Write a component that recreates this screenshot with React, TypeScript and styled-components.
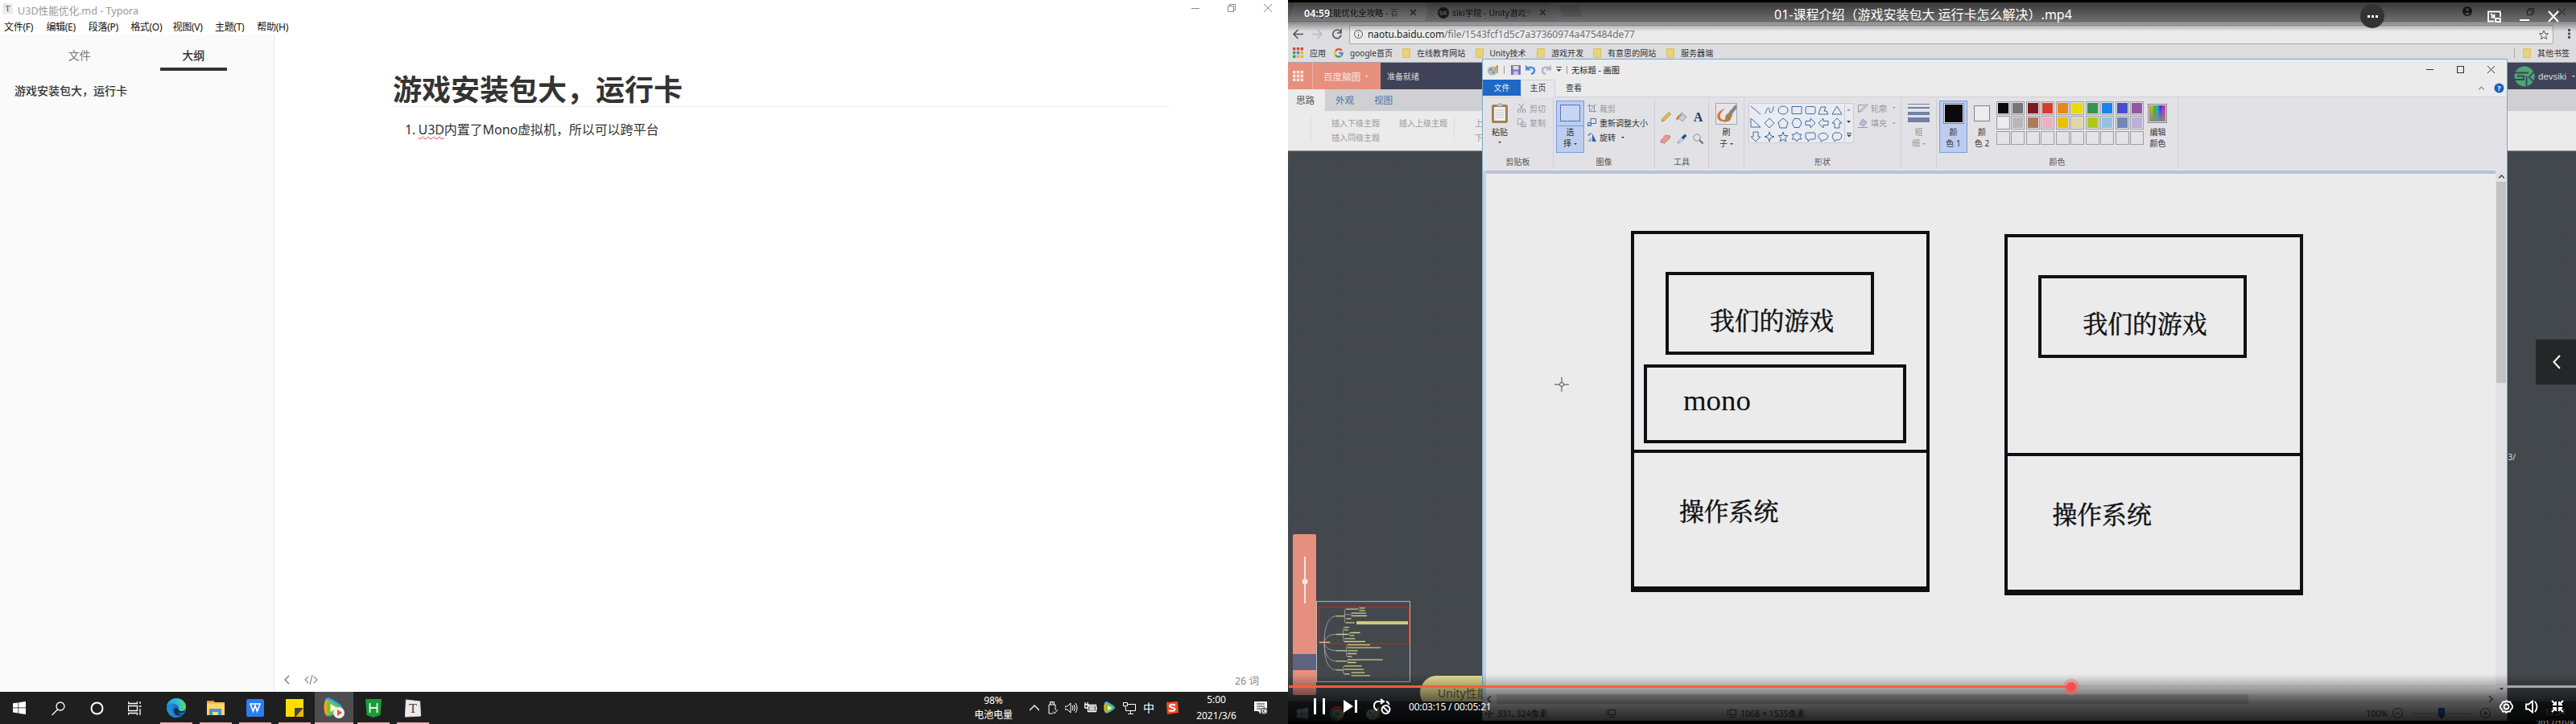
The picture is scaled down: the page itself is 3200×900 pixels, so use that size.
import React from "react";
import styled, { createGlobalStyle, css } from "styled-components";

const Global = createGlobalStyle`
  * { box-sizing: border-box; }
  body { margin: 0; background: #fff; overflow: hidden; }
  svg { display: block; flex: none; }
`;
const sans = `"Noto Sans", "Noto Sans CJK SC", sans-serif`;

const Desktop = styled.div`
  display: flex;
  width: 3200px;
  height: 900px;
  font-family: ${sans};
  white-space: nowrap;
`;

/* ---------- Editor ---------- */
const LeftScreen = styled.div`
  width: 1600px;
  height: 900px;
  display: flex;
  flex-direction: column;
  background: #fff;
`;
const EditorTitle = styled.div`
  height: 24px;
  display: flex;
  align-items: center;
  padding: 0 20px 4px 3px;
  font-size: 12.6px;
  color: #999;
`;
const TitleName = styled.span`
  flex: 1;
  margin-left: 6px;
  padding-top: 4px;
`;
const WindowButtons = styled.div`
  display: flex;
  gap: 35px;
`;
const MenuBar = styled.div`
  height: 19px;
  display: flex;
  padding-left: 5px;
  font-size: 12px;
  line-height: 19px;
  color: #111;
  letter-spacing: -0.3px;
`;
const MenuItem = styled.span`
  width: 52.4px;
`;
const EditorBody = styled.div`
  flex: 1;
  display: flex;
`;
const Sidebar = styled.aside`
  width: 341px;
  background: #fafafa;
  border-right: 1px solid #e7e7e7;
`;
const SideTabs = styled.div`
  display: flex;
  height: 45px;
  padding-left: 57px;
`;
const SideTab = styled.div<{ $active?: boolean }>`
  width: 84px;
  margin-right: 58px;
  text-align: center;
  font-size: 14px;
  line-height: 52px;
  height: 45px;
  color: ${(p) => (p.$active ? "#333" : "#777")};
  font-weight: ${(p) => (p.$active ? 500 : 400)};
  border-bottom: ${(p) => (p.$active ? "4px solid #333" : "0")};
`;
const OutlineItem = styled.div`
  padding: 15px 0 0 18px;
  font-size: 14px;
  line-height: 20px;
  font-weight: 500;
  color: #333;
`;
const Document = styled.main`
  flex: 1;
  display: flex;
  flex-direction: column;
`;
const Article = styled.article`
  flex: 1;
  width: 965px;
  margin-left: 147px;
  padding-top: 44px;
  color: #333;
`;
const Heading = styled.h1`
  margin: 0;
  height: 46px;
  font-size: 36px;
  line-height: 50px;
  font-weight: 700;
  border-bottom: 1px solid #eee;
`;
const ListLine = styled.div`
  display: flex;
  margin-top: 18px;
  padding-left: 15px;
  font-size: 16px;
  line-height: 20px;
  letter-spacing: -0.07px;
`;
const ListNumber = styled.span`
  width: 16.5px;
`;
const Misspelled = styled.span`
  text-decoration: underline wavy #e33 1px;
  text-underline-offset: 2px;
  text-decoration-skip-ink: none;
`;
const DocFooter = styled.footer`
  height: 30px;
  display: flex;
  align-items: center;
  padding: 0 36px 0 12px;
  color: #888;
  font-size: 12.5px;
`;
const WordCount = styled.span`
  margin-left: auto;
`;

/* ---------- Taskbar ---------- */
const Taskbar = styled.div`
  height: 40px;
  display: flex;
  background: #1f1f1f;
  color: #fff;
`;
const TaskButton = styled.div<{ $w: number; $lit?: boolean }>`
  width: ${(p) => p.$w}px;
  display: flex;
  align-items: center;
  justify-content: center;
  background: ${(p) => (p.$lit ? "#4d4d4d" : "transparent")};
`;
const RunningButton = styled(TaskButton)<{ $ml?: number }>`
  height: 40px;
  margin-left: ${(p) => p.$ml ?? 9}px;
  padding-top: 2px;
  border-bottom: 2px solid #f8b0b0;
`;
const Tray = styled.div`
  margin-left: auto;
  width: 395px;
  display: flex;
  align-items: center;
`;
const TrayText = styled.div<{ $w: number; $ml?: number; $line?: number }>`
  width: ${(p) => p.$w}px;
  margin-left: ${(p) => p.$ml ?? 0}px;
  text-align: center;
  font-size: 12px;
  line-height: ${(p) => p.$line ?? 18}px;
  letter-spacing: -0.1px;
`;
const TrayIcons = styled.div`
  display: flex;
  align-items: center;
  gap: 8px;
  margin-left: 17px;
`;
const Ime = styled.span`
  width: 16px;
  margin-right: 5px;
  font-size: 14px;
  line-height: 16px;
  text-align: center;
`;

/* ---------- Video ---------- */
const Video = styled.div`
  position: relative;
  width: 1600px;
  height: 900px;
  padding: 3px 0 4px;
  overflow: hidden;
  background: #000;
`;
const Recording = styled.div`
  display: flex;
  flex-direction: column;
  height: 893px;
  background: #43484c;
  font-size: 10px;
  color: #333;
`;
const ChromeTabs = styled.div`
  height: 24px;
  display: flex;
  align-items: flex-end;
  background: #c9c9cc;
  border-bottom: 1px solid #aaa;
`;
const ChromeTab = styled.div<{ $active?: boolean; $w: number }>`
  width: ${(p) => p.$w}px;
  height: 23px;
  display: flex;
  align-items: center;
  padding: 2px 12px 0 16px;
  margin-left: ${(p) => (p.$active ? 0 : -8)}px;
  font-size: 10.4px;
  color: #222;
  background: ${(p) => (p.$active ? "#dddde0" : "#c2c2c5")};
  clip-path: polygon(8px 0, calc(100% - 8px) 0, 100% 100%, 0 100%);
`;
const TabTitle = styled.span<{ $w: number }>`
  width: ${(p) => p.$w}px;
  overflow: hidden;
  margin: 0 9px 0 4px;
  mask-image: linear-gradient(to right, #000 85%, transparent);
`;
const NewTab = styled.div`
  width: 25px;
  height: 14px;
  margin: 0 0 5px 6px;
  background: #b4b4b7;
  border-radius: 3px;
  transform: skewX(18deg);
`;
const AccountArea = styled.div`
  margin-left: auto;
  display: flex;
  align-items: center;
  gap: 30px;
  padding: 0 13px 6px 0;
`;
const AddressRow = styled.div`
  height: 30px;
  display: flex;
  align-items: center;
  padding: 0 7px 0 6px;
  gap: 11px;
  background: #dddde0;
`;
const AddressBox = styled.div`
  flex: 1;
  height: 24px;
  margin: 1px 7px 0 -2px;
  display: flex;
  align-items: center;
  padding: 0 5px;
  background: #ebebec;
  border: 1px solid #a8a8aa;
  border-radius: 2px;
  font-size: 12px;
  letter-spacing: -0.05px;
  color: #6d6d70;
`;
const Url = styled.span`
  flex: 1;
  margin-left: 6px;
  b { color: #222; font-weight: 400; }
`;
const Bookmarks = styled.div`
  height: 21px;
  display: flex;
  align-items: center;
  padding: 0 8px 3px 6px;
  background: #dddde0;
  border-bottom: 1px solid #a5a5b0;
  color: #333;
`;
const Bookmark = styled.span<{ $w: number }>`
  width: ${(p) => p.$w}px;
  display: flex;
  align-items: center;
  gap: 8px;
  letter-spacing: 0.05px;
`;
const FolderIcon = styled.i`
  width: 10px;
  height: 12px;
  background: #e8d27c;
  border: 1px solid #d9c064;
  border-radius: 1px;
`;
const OtherBookmarks = styled.span`
  margin-left: auto;
  display: flex;
  align-items: center;
  gap: 8px;
  height: 13px;
  padding-left: 10px;
  border-left: 1px solid #aaa;
`;
const NaotuHeader = styled.div`
  height: 33px;
  display: flex;
  align-items: center;
  background: #404357;
  color: #d8d8dc;
`;
const NaotuApps = styled.div`
  width: 31px;
  height: 33px;
  padding: 10px 0 0 6px;
  background: #e7907d;
  border-right: 1px solid #efb5a8;
`;
const NaotuBrand = styled.div`
  width: 84px;
  height: 33px;
  display: flex;
  align-items: center;
  gap: 3px;
  padding-left: 13px;
  background: #e7907d;
  font-size: 11.6px;
  color: #fae6e1;
`;
const NaotuStatus = styled.span`
  margin-left: 8px;
`;
const NaotuUser = styled.div`
  margin-left: auto;
  width: 77px;
  display: flex;
  align-items: center;
  gap: 4px;
  font-family: "Liberation Sans", sans-serif;
  font-size: 11.5px;
`;
const NaotuTabs = styled.div`
  height: 27px;
  display: flex;
  background: #d0d0d2;
  font-size: 11.6px;
  line-height: 27px;
  color: #4674ad;
`;
const NaotuTab = styled.div<{ $active?: boolean }>`
  width: ${(p) => (p.$active ? 46 : 48)}px;
  padding-left: ${(p) => (p.$active ? 10 : 13)}px;
  ${(p) => p.$active && css`background: #ebebec; color: #555;`}
`;
const NaotuTools = styled.div`
  height: 50px;
  display: flex;
  padding-top: 6px;
  background: #ebebec;
  border-bottom: 1px solid #999;
  line-height: 18px;
  color: #999;
`;
const ToolColumn = styled.div<{ $w: number; $pl?: number; $line?: boolean }>`
  width: ${(p) => p.$w}px;
  height: 32px;
  padding-left: ${(p) => p.$pl ?? 0}px;
  border-right: ${(p) => (p.$line ? "1px solid #dcdcde" : "0")};
`;
const MindCanvas = styled.div`
  position: relative;
  flex: 1;
  overflow: hidden;
  background-color: #43484c;
  background-image:
    repeating-linear-gradient(90deg, rgba(70, 60, 60, 0.12) 0 1px, transparent 1px 17px),
    repeating-linear-gradient(0deg, rgba(70, 60, 60, 0.1) 0 1px, transparent 1px 23px);
`;
const ZoomPanel = styled.div`
  position: absolute;
  left: 6px;
  top: 476px;
  width: 29px;
  height: 200px;
  border-radius: 2px;
  background: linear-gradient(#e78f7e 0 149px, #5f6280 149px 169px, #e78f7e 169px);
`;
const MiniMap = styled.div`
  position: absolute;
  left: 35px;
  top: 559px;
`;
const MindNode = styled.div`
  position: absolute;
  left: 164px;
  top: 652px;
  width: 200px;
  height: 42px;
  padding-left: 22px;
  border-radius: 21px;
  background: #e6dd92;
  font-size: 14px;
  line-height: 43px;
  color: #6b6435;
`;
const ClippedNote = styled.span`
  position: absolute;
  right: 75px;
  top: 373px;
  color: #ddd;
`;
const RecordedTaskbar = styled.div`
  height: 24px;
  display: flex;
  align-items: center;
  padding: 5px 0 0 11px;
  background: #282b30;
  gap: 27px;
`;
const RecordedClock = styled.div`
  margin-left: auto;
  width: 52px;
  line-height: 14px;
  color: #aaa;
  padding-top: 10px;
  text-align: center;
`;

/* ---------- Paint window ---------- */
const PaintWindow = styled.div`
  position: absolute;
  left: 241px;
  top: 73px;
  width: 1274px;
  height: 823px;
  display: flex;
  flex-direction: column;
  background: #ebebec;
  border: 1px solid #74aacd;
  border-bottom: 0;
  font-size: 10px;
  color: #333;
`;
const PaintTitle = styled.div`
  height: 25px;
  display: flex;
  align-items: center;
  padding: 0 15px 0 6px;
`;
const Divider = styled.i<{ $ml: number }>`
  width: 1px;
  height: 10px;
  margin-left: ${(p) => p.$ml}px;
  background: #999;
`;
const PaintTools = styled.div`
  display: flex;
  align-items: center;
  gap: 6px;
  margin-left: 8px;
`;
const PaintName = styled.span`
  flex: 1;
  margin-left: 5px;
  font-size: 10.3px;
  color: #222;
`;
const PaintControls = styled.div`
  display: flex;
  gap: 29px;
`;
const PaintTabs = styled.div`
  height: 22px;
  display: flex;
  line-height: 21px;
  text-align: center;
  border-bottom: 1px solid #d0d0d4;
`;
const PaintTab = styled.div<{ $kind?: "file" | "active"; $w: number }>`
  width: ${(p) => p.$w}px;
  height: ${(p) => (p.$kind === "file" ? 20 : 22)}px;
  ${(p) => p.$kind === "file" && css`background: #2068c6; color: #e8eefa;`}
  ${(p) => p.$kind === "active" && css`background: #e8e8eb; border: 1px solid #d0d0d4; border-bottom: 0; line-height: 19px;`}
`;
const TabTail = styled.div`
  margin-left: auto;
  display: flex;
  align-items: center;
  gap: 12px;
  padding-right: 3px;
`;
const Ribbon = styled.div`
  height: 91px;
  display: flex;
  background: #e2e2e6;
`;
const Group = styled.section<{ $w: number }>`
  width: ${(p) => p.$w}px;
  height: 87px;
  margin-top: 1px;
  border-right: 1px solid #d0d0d4;
`;
const GroupBody = styled.div<{ $pl?: number; $gap?: number }>`
  height: 71px;
  display: flex;
  gap: ${(p) => p.$gap ?? 0}px;
  padding: 3px 0 0 ${(p) => p.$pl ?? 0}px;
`;
const GroupLabel = styled.div`
  line-height: 17px;
  text-align: center;
  color: #555;
`;
const TallButton = styled.div<{ $w: number; $on?: boolean; $dim?: boolean }>`
  width: ${(p) => p.$w}px;
  height: 65px;
  display: flex;
  flex-direction: column;
  align-items: center;
  line-height: 14px;
  text-align: center;
  ${(p) => p.$on && css`background: #bccdf0; box-shadow: inset 0 0 0 1px #7a9be0;`}
  ${(p) => p.$dim && css`color: #999;`}
`;
const TallArt = styled.div<{ $split?: boolean }>`
  width: 100%;
  height: 32px;
  display: flex;
  align-items: center;
  justify-content: center;
  border-bottom: ${(p) => (p.$split ? "1px solid #7a9be0" : "0")};
`;
const CommandList = styled.div<{ $ml?: number }>`
  display: flex;
  flex-direction: column;
  margin-left: ${(p) => p.$ml ?? 0}px;
`;
const Command = styled.div<{ $dim?: boolean }>`
  height: 18.4px;
  display: flex;
  align-items: center;
  gap: 4px;
  color: ${(p) => (p.$dim ? "#999" : "#333")};
`;
const Arrow = styled.i`
  display: inline-block;
  border: 2.5px solid transparent;
  border-top-color: currentColor;
  border-bottom: 0;
  margin-left: 3px;
  vertical-align: middle;
`;
const CenterArrow = styled(Arrow)`
  margin: 5px 0 0;
`;
const ToolGrid = styled.div`
  display: grid;
  grid-template-columns: repeat(3, 20px);
  grid-template-rows: 27px 27px;
  padding-top: 7px;
  align-items: center;
  justify-items: center;
`;
const Gallery = styled.div`
  width: 131px;
  height: 50px;
  margin-top: 3px;
  display: flex;
  background: #e9ebf2;
  border: 1px solid #cdcdd2;
`;
const ShapeGrid = styled.div`
  display: grid;
  grid-template-columns: repeat(7, 16.8px);
  grid-template-rows: repeat(3, 16.3px);
  align-items: center;
  justify-items: center;
  border-right: 1px solid #cdcdd2;
`;
const GalleryScroll = styled.div`
  flex: 1;
  display: flex;
  flex-direction: column;
  align-items: center;
  justify-content: space-around;
`;
const ColorSwatch = styled.i<{ $s: number; $c: string }>`
  width: ${(p) => p.$s}px;
  height: ${(p) => p.$s}px;
  background: ${(p) => p.$c};
  border: 1px solid #85858a;
  box-shadow: inset 0 0 0 1px #e8e8ea;
`;
const Palette = styled.div`
  display: grid;
  grid-template-columns: repeat(10, 17px);
  grid-auto-rows: 17px;
  gap: 1.4px 1.45px;
  padding-top: 1px;
`;
const Cell = styled.i<{ $c: string }>`
  border: 1px solid #a0a0a4;
  padding: 1px;
  background: ${(p) => p.$c} content-box;
`;
const Spectrum = styled.i`
  width: 24px;
  height: 24px;
  border: 1px solid #888;
  box-shadow: inset 0 0 0 1px #ddd;
  background: linear-gradient(transparent, #888),
    linear-gradient(90deg, #e33, #e8c800, #1cc628, #14b8d8, #2a2ae8, #d21de0, #e8304a);
`;
const WorkArea = styled.div`
  flex: 1;
  display: flex;
  padding-left: 4px;
  background: #c9cde0;
`;
const WorkLeft = styled.div`
  flex: 1;
  display: flex;
  flex-direction: column;
  border-top: 4px solid #bbc0d4;
`;
const Canvas = styled.div`
  position: relative;
  flex: 1;
  background: #ebebec;
`;
const VScroll = styled.div`
  width: 14px;
  display: flex;
  flex-direction: column;
  align-items: center;
  background: #e1e1e4;
  padding: 5px 0 16px;
`;
const VThumb = styled.div`
  width: 12px;
  height: 250px;
  margin: 4px 0 auto;
  background: #c2c2c4;
`;
const HScroll = styled.div`
  height: 12px;
  display: flex;
  align-items: center;
  background: #dcdcdf;
`;
const HThumb = styled.div`
  width: 934px;
  height: 12px;
  margin: 0 auto 0 3px;
  background: #bdbdc0;
`;
const StatusBar = styled.div`
  height: 21px;
  display: flex;
  align-items: center;
  padding: 2px 20px 0 3px;
  background: #e2e2e6;
  font-size: 10.5px;
`;
const StatusPart = styled.span<{ $w: number }>`
  width: ${(p) => p.$w}px;
  display: flex;
  align-items: center;
  gap: 5px;
`;
const ZoomTools = styled.span`
  margin-left: auto;
  display: flex;
  align-items: center;
  gap: 6px;
`;
const Frame = styled.div<{ $x: number; $y: number; $w: number; $h: number; $foot?: number }>`
  position: absolute;
  left: ${(p) => p.$x}px;
  top: ${(p) => p.$y}px;
  width: ${(p) => p.$w}px;
  height: ${(p) => p.$h}px;
  border: 4px solid #101012;
  border-bottom-width: ${(p) => p.$foot ?? 4}px;
`;
const Sketch = styled.div<{ $x: number; $y: number; $latin?: boolean }>`
  position: absolute;
  left: ${(p) => p.$x}px;
  top: ${(p) => p.$y}px;
  font-family: "Liberation Serif", "Noto Serif CJK SC", "Noto Sans CJK SC", serif;
  font-size: ${(p) => (p.$latin ? 36.8 : 30.8)}px;
  line-height: 40px;
  color: #101012;
  -webkit-text-stroke: ${(p) => (p.$latin ? 0 : 0.5)}px #101012;
`;
const Crosshair = styled.div`
  position: absolute;
  left: 85px;
  top: 253px;
`;

/* ---------- Player overlay ---------- */
const TopShade = styled.div`
  position: absolute;
  inset: 3px 0 auto;
  height: 36px;
  display: flex;
  padding-left: 20px;
  color: #fff;
  background: linear-gradient(rgba(0, 0, 0, 0.72), rgba(0, 0, 0, 0.48) 60%, transparent);
`;
const Clock = styled.span`
  width: 584px;
  font-size: 12.5px;
  font-weight: 600;
  line-height: 27px;
`;
const VideoTitle = styled.span`
  width: 728px;
  font-size: 16px;
  line-height: 30px;
`;
const MoreButton = styled.div`
  width: 30px;
  height: 30px;
  margin: 2px 113px 0 0;
  display: flex;
  align-items: center;
  justify-content: center;
  gap: 2px;
  border-radius: 50%;
  background: #333;
  i { width: 3px; height: 3px; background: #fff; }
`;
const PlayerWindow = styled.div`
  display: flex;
  gap: 23px;
  padding-top: 10px;
  margin-left: 15px;
`;
const BottomShade = styled.div`
  position: absolute;
  inset: auto 0 4px;
  height: 58px;
  background: linear-gradient(transparent, rgba(0, 0, 0, 0.36) 35%, rgba(0, 0, 0, 0.62) 60%, rgba(0, 0, 0, 0.84));
`;
const Progress = styled.div`
  position: absolute;
  left: 1px;
  right: 0;
  top: 852px;
  height: 3px;
  display: flex;
  align-items: center;
  background: #a6a6a6;
`;
const Played = styled.div`
  width: 972px;
  height: 3px;
  background: #ff5c38;
`;
const Knob = styled.div`
  width: 12px;
  height: 12px;
  margin-left: -6px;
  border-radius: 50%;
  background: #ff4b46;
  box-shadow: 0 0 0 4.5px rgba(255, 90, 90, 0.35);
`;
const Controls = styled.div`
  position: absolute;
  inset: auto 0 4px;
  height: 36px;
  display: flex;
  align-items: center;
  padding: 0 15px 0 32px;
  color: #fff;
  font-size: 12px;
`;
const ControlGroup = styled.div<{ $gap: number }>`
  display: flex;
  align-items: center;
  gap: ${(p) => p.$gap}px;
`;
const PlayTime = styled.span`
  margin: 0 auto 0 22px;
  letter-spacing: -0.18px;
`;
const DrawerTab = styled.div`
  position: absolute;
  right: 0;
  top: 422px;
  width: 50px;
  height: 56px;
  display: flex;
  align-items: center;
  padding-left: 21px;
  background: #242628;
`;

/* ---------- Icons ---------- */
type IconProps = { d: string; w?: number; h?: number; c?: string; s?: number; fill?: string };
const Icon = ({ d, w = 16, h = w, c = "currentColor", s = 1, fill = "none" }: IconProps) => (
  <svg width={w} height={h} viewBox={`0 0 ${w} ${h}`} fill={fill} stroke={s ? c : "none"} strokeWidth={s}>
    <path d={d} />
  </svg>
);
const Paper = ({ w, h }: { w: number; h: number }) => (
  <svg width={w} height={h} viewBox="0 0 22 24">
    <path d="M2 1l18 2 1 19-20 1z" fill="#ececec" stroke="#ddd" />
    <text x="11" y="18" fontSize="17" textAnchor="middle" fontFamily="Liberation Serif" fill="#444">T</text>
  </svg>
);
const WinLogo = ({ s, c = "#fff" }: { s: number; c?: string }) => (
  <svg width={s} height={s} viewBox="0 0 16 16" fill={c}>
    <path d="M0 2.3l6.5-.9v6.2H0zM7.2 1.3L16 0v7.6H7.2zM0 8.3h6.5v6.2L0 13.6zM7.2 8.3H16V16l-8.8-1.3z" />
  </svg>
);
const Edge = () => (
  <svg width="24" height="24" viewBox="0 0 24 24">
    <defs>
      <linearGradient id="eg" x1="0" x2="1"><stop stopColor="#1b9de2" /><stop offset=".6" stopColor="#2fc3d0" /><stop offset="1" stopColor="#62d84e" /></linearGradient>
    </defs>
    <circle cx="12" cy="12" r="12" fill="#1473c9" />
    <path d="M0 11C0 5 5 0 12 0s12 5 12 10c0 4-3 6-6 6-2.500 0-4-1-3.500-2.500C16 11 14 8 10 7 5 6 1 8 0 11z" fill="url(#eg)" />
    <path d="M14.500 13.500C12 10 8 13 9 17c1 4 6 6 12 3-3 1-6 0-7-2.500 3 1.500 7 1 9-2-2 .8-8 1.200-8.500-2z" fill="#12304f" />
    <path d="M10 7c-4 3-4 9 0 14 1 1.300 3 2.600 5 3-8 1-14-4-15-11 1-5 6-7 10-6z" fill="#2089d8" />
  </svg>
);
const Explorer = () => (
  <svg width="22" height="20" viewBox="0 0 22 20">
    <path d="M0 1h8l2 2h12v16H0z" fill="#f5c04a" />
    <path d="M0 5h22v14H0z" fill="#ffd766" />
    <path d="M0 1h8l1.500 2H0z" fill="#d99a1c" />
    <path d="M3 11h15v8h-4v-4H7v4H3z" fill="#3f97dc" />
  </svg>
);
const Wps = () => (
  <svg width="22" height="22" viewBox="0 0 22 22">
    <rect width="22" height="22" rx="2.500" fill="#2c7df2" />
    <path d="M4 6h14M5 6l3.500 9L11 8l2.500 7L17 6" fill="none" stroke="#fff" strokeWidth="1.700" />
  </svg>
);
const Note = () => (
  <svg width="22" height="22" viewBox="0 0 22 22">
    <path d="M0 0h22v22H0z" fill="#fd0" /><path d="M11 11h11L12.500 22H11z" fill="#444" /><path d="M22 11v11h-9.500z" fill="#f0b400" />
  </svg>
);
const TencentVideo = ({ s, badge }: { s: number; badge?: boolean }) => (
  <svg width={s} height={s} viewBox="0 0 26 26">
    <path d="M3 1c2-2 6 0 9 2 5 3 10 6 11 9s-10 9-14 11c-3 1-6 1-7-2C0 15 0 5 3 1z" fill="#2ba4f5" />
    <path d="M2 4c1-2 5-1 9 2 4 2 8 5 8 7 0 3-8 8-12 9-2 0-4 0-5-2C0 16 0 9 2 4z" fill="#ff9e17" />
    <path d="M6 4c3 0 14 6 14 9S9 22 6 22 4 4 6 4z" fill="#72c92c" />
    <path d="M8.500 8l8 5-8 5z" fill="#fff" />
    {badge && <><circle cx="19" cy="19" r="7" fill="#eee" /><path d="M17 15l6 4-6 4z" fill="#f4502d" /></>}
  </svg>
);
const HBuilder = () => (
  <svg width="20" height="23" viewBox="0 0 20 23">
    <path d="M0 0h20l-1.500 20L10 23l-8.500-3z" fill="#1a9c38" />
    <path d="M5.500 5v12M14.500 5v12M5.500 11h9" stroke="#e6f7e9" strokeWidth="1.800" />
  </svg>
);
const Sogou = () => (
  <svg width="16" height="16" viewBox="0 0 16 16">
    <path d="M1 1l14-1 1 14-14 2z" fill="#f4481e" />
    <path d="M12 4.500C9 3.200 4.500 3.700 5 6c.4 1.700 6.500 1.200 6.500 3.500S7 12.500 4 11" fill="none" stroke="#fff" strokeWidth="2" />
  </svg>
);
const ActionCenter = () => (
  <svg width="19" height="17" viewBox="0 0 19 17">
    <path d="M0 0h16v12H8v4l-3-4H0z" fill="#fff" /><path d="M3 3h10M3 6h10M3 9h6" stroke="#222" /><circle cx="12.500" cy="12" r="4" fill="#ddd" stroke="#222" />
    <path d="M13.500 9q-4 3 0 6" fill="none" stroke="#222" />
  </svg>
);
const ChromeLogo = () => (
  <svg width="18" height="18" viewBox="0 0 18 18">
    <circle cx="9" cy="9" r="9" fill="#d8b838" /><path d="M9 9L1.200 4.500A9 9 0 0 1 16.800 5z" fill="#d84a38" />
    <path d="M9 9L1.200 4.500A9 9 0 0 0 8 18z" fill="#3a9c50" /><circle cx="9" cy="9" r="4" fill="#4a7fd8" stroke="#ddd" />
  </svg>
);
const PaintLogo = ({ s }: { s: number }) => (
  <svg width={s} height={s} viewBox="0 0 14 14">
    <ellipse cx="6" cy="8" rx="6" ry="5" fill="#9fc3dc" stroke="#6b9cc0" strokeWidth=".6" />
    <circle cx="4" cy="6.500" r="1.300" fill="#d84a38" /><circle cx="3.500" cy="9.500" r="1.200" fill="#e8c53c" /><circle cx="7" cy="10" r="1.300" fill="#4ba04b" />
    <path d="M7 8l4-7 2 0V11H11.500V5L8.500 9z" fill="#e09a3c" />
  </svg>
);
const Google = () => (
  <svg width="12" height="12" viewBox="0 0 12 12" fill="none" strokeWidth="2.200">
    <path d="M9.800 3A4.700 4.700 0 0 0 2 3.500" stroke="#dd4b3c" /><path d="M2 3.500a4.700 4.700 0 0 0 0 5" stroke="#e8b820" />
    <path d="M2 8.500a4.700 4.700 0 0 0 7 1" stroke="#3a9c50" /><path d="M9 9.500A4.500 4.500 0 0 0 10.600 6H6.200" stroke="#4a7fd8" />
  </svg>
);
const DotGrid = ({ colors }: { colors: string[] }) => (
  <svg width="13" height="13" viewBox="0 0 13 13">
    {Array.from({ length: 9 }, (_, i) => (
      <rect key={i} x={(i % 3) * 4.8} y={Math.floor(i / 3) * 4.8} width="3.400" height="3.400" fill={colors[i % colors.length]} />
    ))}
  </svg>
);
const SikiLogo = () => (
  <svg width="26" height="26" viewBox="0 0 26 26">
    <circle cx="13" cy="13" r="12.500" fill="#4ba873" />
    <path d="M0 8.500h18M4 12.500h8v4.500H0M15.500 12.500V25M25 7l-6.500 7 6.500 6" fill="none" stroke="#404357" strokeWidth="1.800" />
  </svg>
);
const SikiBadge = () => (
  <svg width="14" height="14" viewBox="0 0 14 14">
    <circle cx="7" cy="7" r="7" fill="#333" />
    <path d="M6 5H3v2h3v2H2.500M8 4.500v5M11.500 4.500L8.500 7l3 2.500" fill="none" stroke="#ccc" strokeWidth="1.200" />
  </svg>
);
const Clipboard = () => (
  <svg width="22" height="26" viewBox="0 0 22 26">
    <rect x="1" y="2" width="20" height="23" rx="2" fill="#a5824c" /><rect x="4" y="5" width="14" height="17" fill="#f0f0f4" />
    <path d="M7 4.500V3l4-2.500L15 3v1.500z" fill="#c8c8cc" stroke="#777" strokeWidth=".7" />
    <path d="M5.500 9h11M5.500 12h11M5.500 15h11M5.500 18h11" stroke="#b8bccb" strokeWidth=".8" />
  </svg>
);
const Brush = () => (
  <svg width="27" height="27" viewBox="0 0 27 27">
    <rect x=".5" y=".5" width="26" height="26" fill="#e4e6ea" stroke="#a8a8ac" />
    <path d="M12 7C3 9 0 17 4 21c4 3 9 3 14 0-6 1-11 0-12-3-1-4 2-8 6-11z" fill="#e07430" />
    <path d="M13 15l5-4 3 4-3 7-7 2z" fill="#a88446" /><path d="M17 11l8-9 1 1v4l-6 8z" fill="#7e8894" />
  </svg>
);
const Undo = ({ c, flip }: { c: string; flip?: boolean }) => (
  <svg width="13" height="13" viewBox="0 0 13 13"><g transform={flip ? "matrix(-1 0 0 1 13 0)" : undefined}>
    <path d="M3 4.500c5-2 8 0 8 3 0 2.500-2 4-4 4.500" fill="none" stroke={c} strokeWidth="2.600" /><path d="M0 .5v7h7z" fill={c} />
  </g></svg>
);
const Save = () => (
  <svg width="12" height="12" viewBox="0 0 12 12"><path d="M0 0h12v12H0z" fill="#7c70b4" /><path d="M2.500 1h7v4.500h-7z" fill="#ddd" /><path d="M3 7.500h6V12H3z" fill="#c4c4d4" /></svg>
);
const CodeToggle = styled.div`
  margin-left: 18px;
`;

const shapes = [
  "M1 2l12 10", "M1 11c2 0 3-8 5-7s0 7 3 6 2-7 4-8", "M1 7a6 5 0 1 0 12 0a6 5 0 1 0-12 0", "M1 2.500h12v9H1z",
  "M3 2.500h8a2 2 0 0 1 2 2v5a2 2 0 0 1-2 2H3a2 2 0 0 1-2-2v-5a2 2 0 0 1 2-2z", "M1 12l3-9h6l-2 5h3l2 4z", "M7 2l6 10H1z",
  "M1 1v11h12z", "M7 1l6 6-6 6-6-6z", "M7 1l6 5-2 7H3L1 6z", "M4 1.500h6L13 7l-3 5.500H4L1 7z", "M1 4.500h6V1l6 6-6 6V9.500H1z",
  "M13 4.500H7V1L1 7l6 6V9.500h6z", "M4 13V7H1l6-6 6 6h-3v6z", "M4 1v6H1l6 6 6-6h-3V1z", "M7 1l1.500 4.500L13 7 8.500 8.500 7 13 5.500 8.500 1 7l4.500-1.500z",
  "M7 1l1.500 4.500H13l-3.500 3L11 13l-4-2.500L3 13l1.500-4.500L1 5.500h4.500z", "M7 1l2 3h4l-2 3 2 3H9l-2 3-2-3H1l2-3-2-3h4z",
  "M2 2h10l1 1v6l-1 1H7l-3 3v-3H2L1 9V3z", "M4 10.500a6 4.300 0 1 1 3 .5L4 13z", "M4 2h6l3 3-1 4-3 2H6l-2 2-.5-2L1 8l1-4z",
];
const row1 = ["#0a0a0c", "#77777a", "#7b1a24", "#d63d2c", "#ea871c", "#e9db00", "#35924f", "#1785ea", "#474dcf", "#9655a5"];
const row2 = ["#ececec", "#b7b7b9", "#ad7c5b", "#edb0c3", "#e9bf00", "#ded8a5", "#acca17", "#93c1e4", "#7087b8", "#b9b1d9"];
const menus = ["文件(F)", "编辑(E)", "段落(P)", "格式(O)", "视图(V)", "主题(T)", "帮助(H)"];

const TypeEditor = () => (
  <>
    <EditorTitle>
      <Paper w={13} h={15} />
      <TitleName>U3D性能优化.md - Typora</TitleName>
      <WindowButtons>
        <Icon w={10} d="M0 5.500h10" c="#888" />
        <Icon w={10} d="M.5 2.500h7v7h-7zM2.500 2.500v-2h7v7h-2" c="#888" />
        <Icon w={10} d="M0 0l10 10M10 0L0 10" c="#888" />
      </WindowButtons>
    </EditorTitle>
    <MenuBar>{menus.map((m) => <MenuItem key={m}>{m}</MenuItem>)}</MenuBar>
    <EditorBody>
      <Sidebar>
        <SideTabs><SideTab>文件</SideTab><SideTab $active>大纲</SideTab></SideTabs>
        <OutlineItem>游戏安装包大，运行卡</OutlineItem>
      </Sidebar>
      <Document>
        <Article>
          <Heading>游戏安装包大，运行卡</Heading>
          <ListLine><ListNumber>1.</ListNumber><span><Misspelled>U3D</Misspelled>内置了Mono虚拟机，所以可以跨平台</span></ListLine>
        </Article>
        <DocFooter>
          <Icon w={7} h={12} d="M6 1L1 6l5 5" c="#777" s={1.4} />
          <CodeToggle><Icon w={17} h={12} d="M5 2L1 6l4 4M12 2l4 4-4 4M10 0L7 12" c="#888" s={1.2} /></CodeToggle>
          <WordCount>26 词</WordCount>
        </DocFooter>
      </Document>
    </EditorBody>
  </>
);

const SystemBar = () => (
  <Taskbar>
    <TaskButton $w={48}><WinLogo s={16} /></TaskButton>
    <TaskButton $w={48}><Icon w={17} d="M16 6a5 5 0 1 1-10 0a5 5 0 1 1 10 0M7.500 10L.5 17" s={1.3} /></TaskButton>
    <TaskButton $w={48}><Icon w={17} d="M15.500 8.500a7 7 0 1 1-14 0a7 7 0 1 1 14 0" s={2} /></TaskButton>
    <TaskButton $w={46}><Icon w={17} d="M.5 0v2.500h11V0M.5 5.500h11v6H.5zM.5 17v-2.500h11V17M15 0v3M15 9v8M13.500 6h3" s={1.3} /></TaskButton>
    <RunningButton $w={40}><Edge /></RunningButton>
    <RunningButton $w={40}><Explorer /></RunningButton>
    <RunningButton $w={40}><Wps /></RunningButton>
    <RunningButton $w={40}><Note /></RunningButton>
    <RunningButton $w={48} $ml={5} $lit><TencentVideo s={26} badge /></RunningButton>
    <RunningButton $w={40} $ml={5}><HBuilder /></RunningButton>
    <RunningButton $w={40}><Paper w={22} h={23} /></RunningButton>
    <Tray>
      <TrayText $w={56} $ml={1}>98%<br />电池电量</TrayText>
      <TrayIcons>
        <Icon w={12} d="M0 9l6-6 6 6" s={1.3} />
        <Icon w={16} d="M5.500 4V.5h5V4M4 4h8v7M4 4v11h5M7 2h2M9 12.500l2 2.500 4-5" />
        <Icon w={16} d="M0 6v4h3l4 4V2L3 6zM9 5q2 3 0 6M11 4q3 4 0 8M13 2q4 6 0 12" />
        <Icon w={16} d="M4.500 4.500h10v8h-10zM15 7v3M6 6.500h7M6 8.500h7M6 10.500h7M1 1v3M4 1v3M0 4h5v2L3 8H1z" s={1.3} />
        <TencentVideo s={16} />
        <Icon w={16} d="M5 3.500h10.500v8H3.500V8M9.500 12v3M6 15.500h7M.5 1.500h5v4h-5zM3 5v3" />
        <Ime>中</Ime>
        <Sogou />
      </TrayIcons>
      <TrayText $w={60} $ml={17} $line={20}>5:00<br />2021/3/6</TrayText>
      <TrayIcons><ActionCenter /></TrayIcons>
    </Tray>
  </Taskbar>
);

const Map = () => (
  <svg width="117" height="101" viewBox="135 321 351 302" fill="none">
    <rect x="136.500" y="322.500" width="348" height="299" stroke="#b9bbbd" strokeWidth="3" />
    <g stroke="#a9abac" strokeWidth="2.500">
      <path d="M165 475C165 420 180 377 210 377M165 475C168 455 185 445 210 445M165 475C168 495 185 506 210 506M165 475C165 525 185 545 210 545M165 475C165 540 180 578 210 578" />
      <path d="M246 351q-5 0-5 8v35q0 8 5 8M241 371h25M240 419q-4 0-4 8v37q0 8 4 8M252 484q-4 0-4 8v28q0 8 4 8M240 563q-4 0-4 6v18q0 6 4 6M248 545h6M260 438v12" />
    </g>
    <path d="M145 475h42M210 377h31M246 351h46M295 347h22M295 356h22M266 366h54M266 376h58M246 387h20M246 402h32M210 445h46M240 419h18M240 429h14M262 439h37M262 450h15M240 461h40M240 472h78M210 506h38M252 484h84M252 495h124M252 506h38M252 517h34M252 528h17M210 545h38M252 540h131M252 550h32M210 578h26M240 563h65M240 576h72M266 588h50M266 599h70M240 593h20" stroke="#cfcb8a" strokeWidth="4" />
    <path d="M285 402h192" stroke="#d4cc84" strokeWidth="12" />
    <path d="M145 343h334v137H145z" stroke="#b82f1c" strokeWidth="3" />
  </svg>
);

const Browser = () => (
  <Recording>
    <ChromeTabs>
      <ChromeTab $w={178} $active>
        <TabTitle $w={123}>Unity性能优化全攻略 - 百</TabTitle><Icon w={7} d="M0 0l7 7M7 0L0 7" c="#444" s={1.3} />
      </ChromeTab>
      <ChromeTab $w={162}>
        <SikiBadge />
        <TabTitle $w={110}>siki学院 - Unity游戏开发</TabTitle><Icon w={7} d="M0 0l7 7M7 0L0 7" c="#444" s={1.3} />
      </ChromeTab>
      <NewTab />
      <AccountArea>
        <svg width="12" height="12" viewBox="0 0 12 12"><circle cx="6" cy="6" r="6" fill="#333" /><circle cx="6" cy="4" r="2" fill="#aaa" /><path d="M2.500 9q3.500-3 7 0-3.500 3-7 0" fill="#aaa" /></svg>
        <Icon w={8} d="M0 4.500h8" c="#444" />
        <Icon w={9} d="M.5 2.500h6v6h-6zM2.500 2.500v-2h6v6h-2" c="#444" />
        <Icon w={9} d="M0 0l9 9M9 0L0 9" c="#444" />
      </AccountArea>
    </ChromeTabs>
    <AddressRow>
      <Icon w={13} d="M13 6.500H1M6.500 1L1 6.500 6.500 12" c="#555" s={1.6} />
      <Icon w={13} d="M0 6.500h12M6.500 1L12 6.500 6.500 12" c="#bbb" s={1.5} />
      <Icon w={13} d="M11.500 4A5.200 5.200 0 1 0 12 7.500M12 0v5H7" c="#555" s={1.6} />
      <AddressBox>
        <Icon w={11} d="M10.500 5.500a5 5 0 1 1-10 0a5 5 0 1 1 10 0M5.500 5v3.500M5.500 2.500v1.200" c="#555" />
        <Url><b>naotu.baidu.com</b>/file/1543fcf1d5c7a37360974a475484de77</Url>
        <Icon w={12} d="M6 1l1.500 3.500 4 .3-3 2.700 1 4L6 9.500l-3.500 2 1-4-3-2.700 4-.3z" c="#555" />
      </AddressBox>
      <Icon w={3} h={12} d="M0 0h3v3H0zM0 4.500h3v3H0zM0 9h3v3H0z" fill="#555" s={0} />
    </AddressRow>
    <Bookmarks>
      <Bookmark $w={51}><DotGrid colors={["#d84a38", "#d84a38", "#d84a38", "#3a9c50", "#4a7fd8", "#e8b820", "#3a9c50", "#e8b820", "#e8b820"]} />应用</Bookmark>
      <Bookmark $w={85}><Google />google首页</Bookmark>
      <Bookmark $w={90.5}><FolderIcon />在线教育网站</Bookmark>
      <Bookmark $w={76.5}><FolderIcon />Unity技术</Bookmark>
      <Bookmark $w={70}><FolderIcon />游戏开发</Bookmark>
      <Bookmark $w={91}><FolderIcon />有意思的网站</Bookmark>
      <Bookmark $w={70}><FolderIcon />服务器端</Bookmark>
      <OtherBookmarks><FolderIcon />其他书签</OtherBookmarks>
    </Bookmarks>
    <NaotuHeader>
      <NaotuApps><DotGrid colors={["#fae6e1"]} /></NaotuApps>
      <NaotuBrand>百度脑图<Arrow /></NaotuBrand>
      <NaotuStatus>准备就绪</NaotuStatus>
      <NaotuUser><SikiLogo />devsiki<Arrow /></NaotuUser>
    </NaotuHeader>
    <NaotuTabs><NaotuTab $active>思路</NaotuTab><NaotuTab>外观</NaotuTab><NaotuTab>视图</NaotuTab></NaotuTabs>
    <NaotuTools>
      <ToolColumn $w={29} $line />
      <ToolColumn $w={84} $pl={25}>插入下级主题<br />插入同级主题</ToolColumn>
      <ToolColumn $w={94} $pl={25} $line>插入上级主题</ToolColumn>
      <ToolColumn $w={60} $pl={25}>上移<br />下移</ToolColumn>
    </NaotuTools>
    <MindCanvas>
      <ZoomPanel>
        <svg width="29" height="100" viewBox="0 0 29 100"><path d="M15 28v58" stroke="#efe4e2" strokeWidth="2" /><circle cx="15" cy="59" r="3.500" fill="#efe9e8" /></svg>
      </ZoomPanel>
      <MiniMap><Map /></MiniMap>
      <MindNode>Unity性能优化</MindNode>
      <ClippedNote>3/</ClippedNote>
    </MindCanvas>
    <RecordedTaskbar>
      <WinLogo s={14} c="#aaa" /><ChromeLogo /><PaintLogo s={18} />
      <RecordedClock>13:54<br />2017/10/8</RecordedClock>
    </RecordedTaskbar>
  </Recording>
);

const Pair = ({ x, y }: { x: number; y: number }) => (
  <>
    <Frame $x={x} $y={y} $w={371} $h={449} $foot={7} />
    <Frame $x={x} $y={y} $w={371} $h={276} />
    <Frame $x={x + 42.5} $y={y + 51} $w={259} $h={103} />
    <Sketch $x={x + 98} $y={y + 93}>我们的游戏</Sketch>
    <Sketch $x={x + 60} $y={y + 330}>操作系统</Sketch>
  </>
);

const Paint = () => (
  <PaintWindow>
    <PaintTitle>
      <PaintLogo s={14} /><Divider $ml={6} />
      <PaintTools><Save /><Undo c="#4a90d8" /><Undo c="#b4b4cc" flip /><Icon w={7} h={7} d="M0 0h7v1H0zM.5 3h6l-3 3z" fill="#444" s={0} /></PaintTools>
      <Divider $ml={6} />
      <PaintName>无标题 - 画图</PaintName>
      <PaintControls>
        <Icon w={9} d="M0 4.500h9" /><Icon w={9} d="M.5.5h8v8h-8z" s={1.2} /><Icon w={9} d="M0 0l9 9M9 0L0 9" />
      </PaintControls>
    </PaintTitle>
    <PaintTabs>
      <PaintTab $kind="file" $w={47}>文件</PaintTab>
      <PaintTab $kind="active" $w={43}>主页</PaintTab>
      <PaintTab $w={46}>查看</PaintTab>
      <TabTail>
        <Icon w={7} h={5} d="M0 4.500L3.500 1 7 4.500" c="#888" s={1.2} />
        <svg width="13" height="13" viewBox="0 0 13 13"><circle cx="6.500" cy="6.500" r="6" fill="#1c60c8" /><text x="6.500" y="10" fontSize="9" fontWeight="700" textAnchor="middle" fill="#fff">?</text></svg>
      </TabTail>
    </PaintTabs>
    <Ribbon>
      <Group $w={88}>
        <GroupBody $pl={6}>
          <TallButton $w={30}><TallArt><Clipboard /></TallArt>粘贴<CenterArrow /></TallButton>
          <CommandList $ml={7}>
            <Command $dim><Icon w={11} d="M2 0l5 7M8 0L3 7M4 9a1.800 1.800 0 1 1-3.500 0a1.800 1.800 0 1 1 3.500 0M10 9a1.800 1.800 0 1 1-3.500 0a1.800 1.800 0 1 1 3.500 0" c="#8e93a5" />剪切</Command>
            <Command $dim><Icon w={11} d="M.5.5h4l2 2v5h-6zM4.500 4.500h4l2 2v4h-6zM6 7.500h3M6 9.500h3" c="#9ea4b8" />复制</Command>
          </CommandList>
        </GroupBody>
        <GroupLabel>剪贴板</GroupLabel>
      </Group>
      <Group $w={126}>
        <GroupBody $pl={3}>
          <TallButton $w={35} $on>
            <TallArt $split>
              <svg width="25" height="21" viewBox="0 0 25 21"><path d="M.5.5h24v20H.5z" stroke="#27498c" strokeDasharray="2 1" fill="#c6d5f2" /></svg>
            </TallArt>
            <span>选</span><span>择<Arrow /></span>
          </TallButton>
          <CommandList $ml={4}>
            <Command $dim><Icon w={11} d="M2.500 0v9.500H11M0 2.500h8.500V11M11 0L3 9" c="#8e93a5" />裁剪</Command>
            <Command><Icon w={11} d="M4 .5h6.500v6H4zM.5 5.500h4v4h-4zM4 6.500L.5 10" c="#3c6ea8" />重新调整大小</Command>
            <Command><svg width="11" height="11" viewBox="0 0 11 11"><path d="M6 1v10h5z" fill="#2b62a8" /><path d="M5 5v6H0z" fill="#9aa8bc" /><path d="M1 4q1-3 4-3" fill="none" stroke="#3c8ed0" strokeWidth="1.300" /></svg>旋转<Arrow /></Command>
          </CommandList>
        </GroupBody>
        <GroupLabel>图像</GroupLabel>
      </Group>
      <Group $w={67}>
        <GroupBody $pl={3}>
          <ToolGrid>
            <Icon w={13} d="M1 12l1-3.500 8-8L12.500 3l-8 8z" fill="#e8c050" c="#8a6c30" s={0.7} />
            <svg width="14" height="13" viewBox="0 0 14 13"><path d="M7 1l6 5-5 6-5-4z" fill="#c3cee0" stroke="#7486a5" strokeWidth=".8" /><path d="M7 3Q1 3 0 11l3-2q0-4 4-4z" fill="#d87c40" /></svg>
            <svg width="13" height="13" viewBox="0 0 13 13"><text x="6.500" y="12" fontSize="16" fontWeight="700" textAnchor="middle" fontFamily="Liberation Serif" fill="#25365c">A</text></svg>
            <Icon w={14} h={13} d="M1 9l6-7 6 1-1 3-6 6-5-1z" fill="#e49a8c" c="#b5685c" s={0.7} />
            <svg width="13" height="13" viewBox="0 0 13 13"><path d="M1 12l1.500-3 4-4 2 2-4 4z" fill="#cfe0f0" stroke="#5d7ea8" strokeWidth=".7" /><path d="M5.500 4.500l1.500-1 3-3 2.500 2.500-3 3-1 1.500z" fill="#27528f" /></svg>
            <svg width="13" height="13" viewBox="0 0 13 13"><circle cx="5" cy="5" r="4.200" fill="#dbe4ee" stroke="#8a8f9a" /><path d="M8 8l4.500 4.500" stroke="#77685c" strokeWidth="2" /></svg>
          </ToolGrid>
        </GroupBody>
        <GroupLabel>工具</GroupLabel>
      </Group>
      <Group $w={44}>
        <GroupBody $pl={6}><TallButton $w={31}><TallArt><Brush /></TallArt><span>刷</span><span>子<Arrow /></span></TallButton></GroupBody>
      </Group>
      <Group $w={195}>
        <GroupBody $pl={5} $gap={5}>
          <Gallery>
            <ShapeGrid>{shapes.map((d) => <Icon key={d} w={14} d={d} c="#416a9c" />)}</ShapeGrid>
            <GalleryScroll><Icon w={5} h={3} d="M0 3l2.500-3L5 3z" fill="#aaa" s={0} /><Icon w={5} h={3} d="M0 0h5L2.500 3z" fill="#444" s={0} /><Icon w={6} h={6} d="M0 0h6v1H0zM0 2.500h6l-3 3z" fill="#444" s={0} /></GalleryScroll>
          </Gallery>
          <CommandList>
            <Command $dim><Icon w={12} d="M8 2.500H.5v9L11 1l1 1L4 11H1" c="#9297a8" />轮廓<Arrow /></Command>
            <Command $dim><Icon w={12} d="M6 1l5 4-4 5-5-3zM0 11.500h12" fill="#b8bfd4" c="#9299b4" />填充<Arrow /></Command>
          </CommandList>
        </GroupBody>
        <GroupLabel>形状</GroupLabel>
      </Group>
      <Group $w={44}>
        <GroupBody $pl={4}>
          <TallButton $w={35} $dim><TallArt><Icon w={27} h={24} d="M0 0h27v1H0zM0 4h27v2H0zM0 10h27v4H0zM0 17h27v6H0z" fill="#7380a8" s={0} /></TallArt><span>粗</span><span>细<Arrow /></span></TallButton>
        </GroupBody>
      </Group>
      <Group $w={300}>
        <GroupBody $pl={3}>
          <TallButton $w={35} $on><TallArt><ColorSwatch $s={26} $c="#0a0a0e" /></TallArt><span>颜</span><span>色 1</span></TallButton>
          <TallButton $w={36}><TallArt><ColorSwatch $s={20} $c="#ededee" /></TallArt><span>颜</span><span>色 2</span></TallButton>
          <Palette>{[...row1, ...row2, ...Array(10).fill("#e4e4e8")].map((c, i) => <Cell key={i} $c={c} />)}</Palette>
          <TallButton $w={35}><TallArt><Spectrum /></TallArt><span>编辑</span><span>颜色</span></TallButton>
        </GroupBody>
        <GroupLabel>颜色</GroupLabel>
      </Group>
    </Ribbon>
    <WorkArea>
      <WorkLeft>
        <Canvas>
          <Pair x={180} y={71} />
          <Frame $x={196} $y={237} $w={326} $h={98} />
          <Sketch $x={245} $y={262} $latin>mono</Sketch>
          <Pair x={643.5} y={75} />
          <Crosshair><Icon w={18} d="M9 0v6.500M9 11.500V18M0 9h6.500M11.500 9H18M11.500 9a2.500 2.500 0 1 1-5 0a2.500 2.500 0 1 1 5 0" c="#44444c" /></Crosshair>
        </Canvas>
        <HScroll>
          <Icon w={10} h={8} d="M6 0L2 4l4 4" c="#444" s={1.4} /><HThumb /><Icon w={10} h={8} d="M2 0l4 4-4 4" c="#444" s={1.4} />
        </HScroll>
      </WorkLeft>
      <VScroll><Icon w={7} h={5} d="M0 4.500L3.500 1 7 4.500" c="#444" s={1.5} /><VThumb /><Icon w={5} h={4} d="M0 0h5L2.500 3z" fill="#444" s={0} /></VScroll>
    </WorkArea>
    <StatusBar>
      <StatusPart $w={150}><Icon w={10} d="M5 0v10M0 5h10M3.500 1.500L5 0l1.500 1.500M3.500 8.500L5 10l1.500-1.500M1.500 3.500L0 5l1.500 1.500M8.500 3.500L10 5 8.500 6.500" c="#444" />331, 324像素</StatusPart>
      <StatusPart $w={150}><Icon w={12} h={10} d="M3.500.5h8v6h-8zM1 0v7M3 9h8" c="#444" /></StatusPart>
      <StatusPart $w={150}><Icon w={12} h={10} d="M3.500.5h8v6h-8zM1 0v7M3 9h8" c="#444" />1068 × 1535像素</StatusPart>
      <ZoomTools>
        100%
        <Icon w={13} d="M12.500 6.500a6 6 0 1 1-12 0a6 6 0 1 1 12 0M3.500 6.500h6" c="#444" />
        <svg width="84" height="14" viewBox="3 0 84 14"><path d="M8 7h74" stroke="#999" /><path d="M41 0h8v10l-4 4-4-4z" fill="#1c60c8" /></svg>
        <Icon w={13} d="M12.500 6.500a6 6 0 1 1-12 0a6 6 0 1 1 12 0M3.500 6.500h6M6.500 3.500v6" c="#444" />
      </ZoomTools>
    </StatusBar>
  </PaintWindow>
);

const Player = () => (
  <>
    <TopShade>
      <Clock>04:59</Clock>
      <VideoTitle>01-课程介绍（游戏安装包大 运行卡怎么解决）.mp4</VideoTitle>
      <MoreButton><i /><i /><i /></MoreButton>
      <PlayerWindow>
        <Icon w={17} h={15} d="M8 13.500H1v-12h15V8M4 4l4 4M8.500 4.500v4h-4M10 10h6v4h-6z" s={1.8} />
        <Icon w={12} h={15} d="M0 12h12" s={2} />
        <Icon w={14} h={15} d="M1 1l12 13M13 1L1 14" s={2} />
      </PlayerWindow>
    </TopShade>
    <BottomShade />
    <Progress><Played /><Knob /></Progress>
    <Controls>
      <ControlGroup $gap={20}>
        <Icon w={14} h={20} d="M0 0h3v20H0zM11 0h3v20h-3z" fill="#fff" s={0} />
        <Icon w={20} h={16} d="M3 0l12 8-12 8zM17 0h3v16h-3z" fill="#fff" s={0} />
        <Icon w={22} h={20} d="M5 15C-1 13 0 4 6 4h6M9 1l4 3-4 3M16 4q3 1 3.500 4M20.500 14a5 5 0 1 1-10 0a5 5 0 1 1 10 0M12 10.500l7 7" s={2} />
      </ControlGroup>
      <PlayTime>00:03:15 / 00:05:21</PlayTime>
      <ControlGroup $gap={15}>
        <Icon w={17} d="M8.500 1l2 1.500 2.800 0 1 2.500L16 7v3l-2 2-1 2.500H10L8.500 16 7 14.500H4L3 12 1 10V7l2-2 1-2.500h3zM11.500 8.500a3 3 0 1 1-6 0a3 3 0 1 1 6 0" s={1.8} />
        <Icon w={17} d="M1 5.500v6h3l5 4v-14l-5 4zM12 2q5 6.500 0 13" s={1.8} />
        <Icon w={16} d="M1 1l5 5M6 2v4H2M15 1l-5 5M10 2v4h4M1 15l5-5M6 14v-4H2M15 15l-5-5M10 14v-4h4" s={2} />
      </ControlGroup>
    </Controls>
    <DrawerTab><Icon w={10} h={18} d="M9 1L1.500 9 9 17" c="#fff" s={2} /></DrawerTab>
  </>
);

export default function App() {
  return (
    <>
      <Global />
      <Desktop>
        <LeftScreen><TypeEditor /><SystemBar /></LeftScreen>
        <Video><Browser /><Paint /><Player /></Video>
      </Desktop>
    </>
  );
}
